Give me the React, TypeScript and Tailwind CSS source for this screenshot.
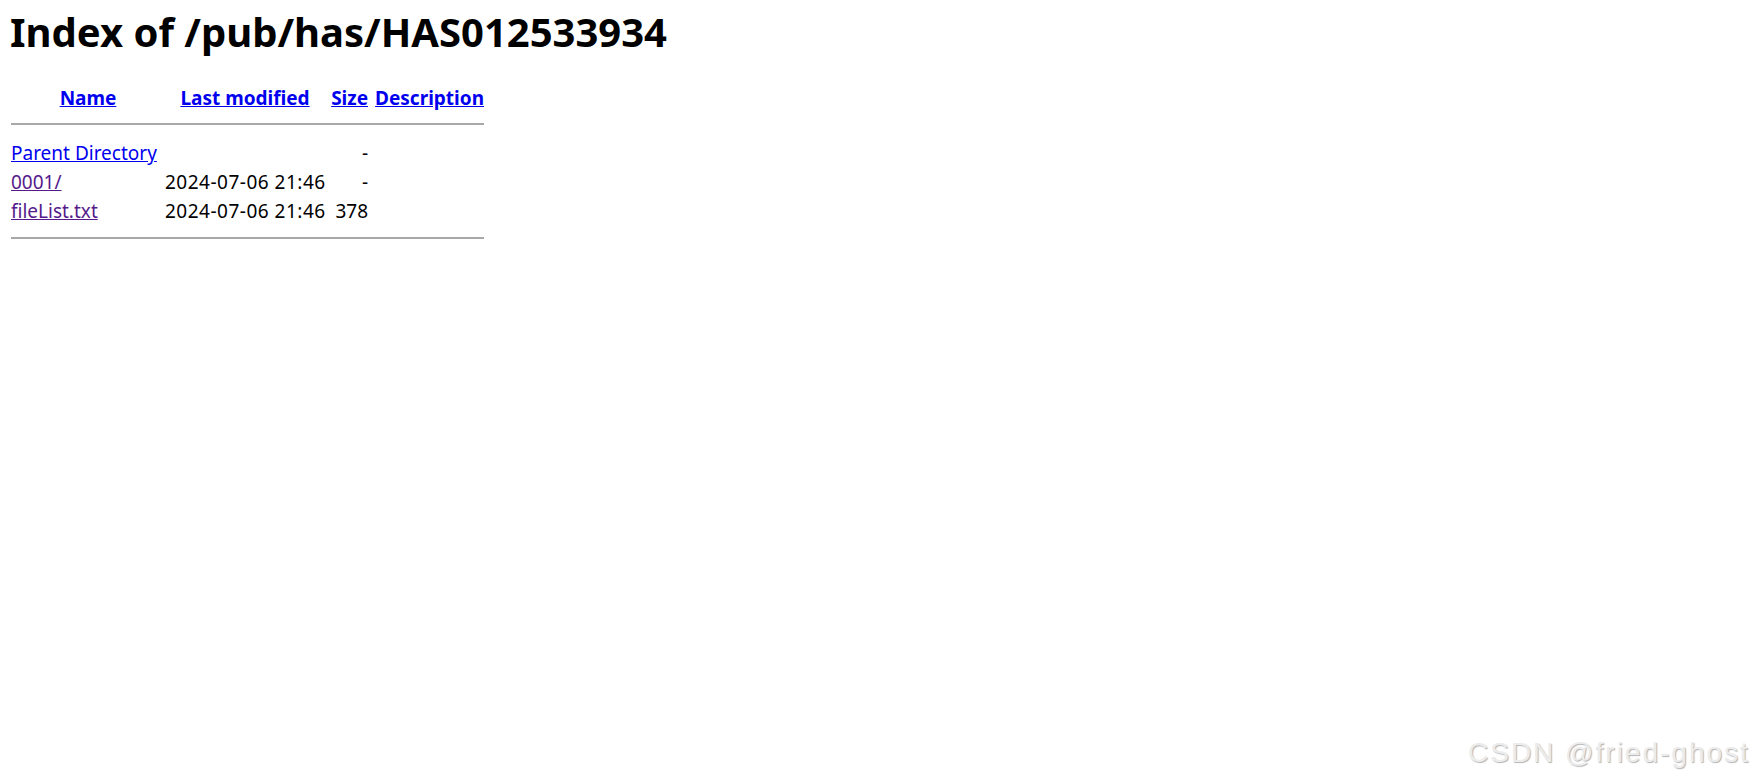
import React from "react";

const font = { fontFamily: '"Noto Sans", "Open Sans", sans-serif' };

export default function App() {
  return (
    <div className="relative w-[1762px] h-[781px] bg-white overflow-hidden text-black" style={font}>
      <div className="pl-[10px] pt-[6px]">
        <h1 className="text-[40px] leading-[52px] font-bold m-0">Index of /pub/has/HAS012533934</h1>
        <div className="pl-[1px] pt-[25px] w-[474px] text-[19px] whitespace-nowrap">
          <div className="grid grid-cols-[154px_160px_43px_116px] h-[30px] leading-[30px] font-bold">
            <div className="text-center"><a href="#" className="text-[#0000ee] underline">Name</a></div>
            <div className="text-center"><a href="#" className="text-[#0000ee] underline">Last modified</a></div>
            <div className="text-right"><a href="#" className="text-[#0000ee] underline">Size</a></div>
            <div className="text-right"><a href="#" className="text-[#0000ee] underline">Description</a></div>
          </div>
          <div className="mt-[10px] h-[2px] bg-[#a8a8a8]" />
          <div className="pt-[14px]">
            {[
              { n: "Parent Directory", d: "", s: "-", c: "text-[#0000ee]" },
              { n: "0001/", d: "2024-07-06 21:46", s: "-", c: "text-[#551a8b]" },
              { n: "fileList.txt", d: "2024-07-06 21:46", s: "378", c: "text-[#551a8b]" },
            ].map((r) => (
              <div key={r.n} className="grid grid-cols-[154px_160px_43px_116px] h-[29px] leading-[29px]">
                <div><a href="#" className={`${r.c} underline`}>{r.n}</a></div>
                <div className="tracking-[0.5px]">{r.d}</div>
                <div className="text-right">{r.s}</div>
                <div></div>
              </div>
            ))}
          </div>
          <div className="mt-[11px] h-[2px] bg-[#a8a8a8]" />
        </div>
      </div>
      <div
        className="absolute left-[1468px] top-[732px] text-[28px] tracking-[2px] text-[#ececec] [text-shadow:1px_1px_1px_#b4b4b4]"
        style={{ fontFamily: '"Liberation Sans", Arial, sans-serif' }}
      >
        CSDN @fried-ghost
      </div>
    </div>
  );
}
